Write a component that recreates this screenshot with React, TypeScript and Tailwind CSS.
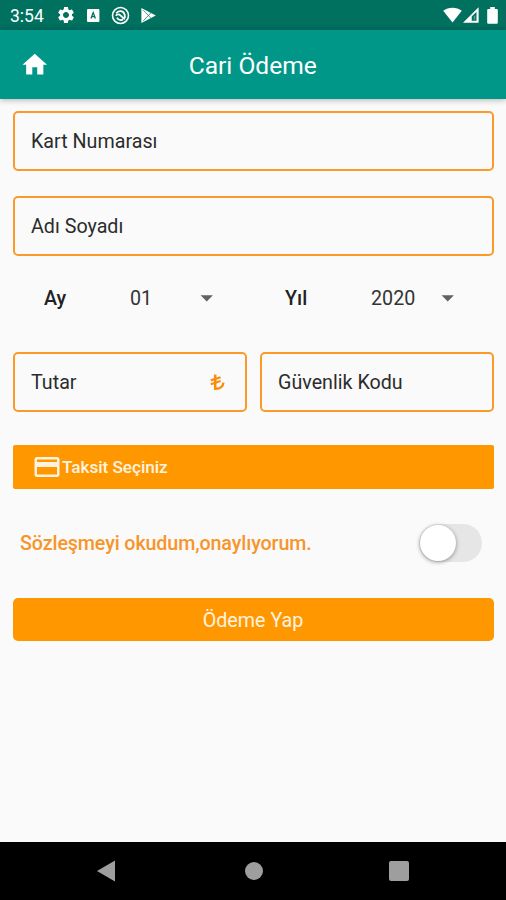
import React, { useState } from 'react';
import { MdArrowDropDown, MdCreditCard, MdHome, MdSettings } from 'react-icons/md';

function StatusBar() {
  return (
    <div className="flex h-[30px] items-center bg-[#00705f] pl-[10px] pr-[8px] text-white">
      <span className="w-[46px] pt-[3px] text-[17.5px] leading-none">3:54</span>
      <MdSettings className="h-[20px] w-[20px]" />
      <svg className="ml-[11px] h-[13px] w-[13px]" viewBox="0 0 13 13">
        <rect x="0" y="0" width="12.4" height="13" rx="1" fill="currentColor" />
        <path d="M4 9.4 6.2 3.6 8.4 9.4M5 7.6h2.5" fill="none" stroke="#00705f" strokeWidth="1.3" />
      </svg>
      <svg className="ml-[11px] h-[19px] w-[19px]" viewBox="0 0 19 19" fill="none" stroke="currentColor">
        <circle cx="9.5" cy="9.5" r="8" strokeWidth="1.6" />
        <path d="M5.2 7.4C7 4.2 12.2 4 13.6 8.4c.4 1.4.3 2.6.2 3.6" strokeWidth="1.8" />
        <path d="M4.8 9.8c1.4-1.8 3.2-1.8 4.6-.4l4.4 4M6 11.6c1.2 2.4 3.6 3 6 1.8" strokeWidth="1.8" />
      </svg>
      <svg className="ml-[11px] h-[15px] w-[15px]" viewBox="0 0 15 15">
        <path d="M.4.1 14.8 7.5.4 14.9Z" fill="currentColor" />
        <path d="M2.3 2.2 9.8 10M2.3 12.8 9.8 5" fill="none" stroke="#00705f" strokeWidth="0.7" />
      </svg>
      <div className="ml-auto flex items-center">
        <svg className="h-[16px] w-[19px]" viewBox="0 0 19 16" fill="currentColor">
          <path d="M9.5 15.6.2 3.8C5.4-.4 13.6-.4 18.8 3.8Z" />
        </svg>
        <svg className="ml-[1px] h-[16px] w-[16px]" viewBox="0 0 16 16">
          <path d="M0 15.7 15.6.3v15.4Z" fill="currentColor" />
          <path d="M8.7 13.7V9.5l4.8-4.7v8.9Z" fill="#00705f" />
          <path d="M10.8 12.5v-3l1.4-1.5v4.5Z" fill="currentColor" opacity="0.35" />
        </svg>
        <svg className="ml-[8px] h-[17px] w-[11px]" viewBox="0 0 11 17" fill="currentColor">
          <path d="M3.2 0h4.6v2h1.9q1.1 0 1.1 1.1v12.6q0 1.1-1.1 1.1H1.3q-1.1 0-1.1-1.1V3.1Q.2 2 1.3 2h1.9Z" />
        </svg>
      </div>
    </div>
  );
}

function AppBar() {
  return (
    <header className="relative z-10 flex h-[69px] items-center bg-[#009788] pl-[20px] text-white shadow-[0_1px_6px_rgba(0,0,0,0.3)]">
      <MdHome className="h-[29.5px] w-[29.5px]" />
      <h1 className="flex-1 pr-[50px] pt-[3px] text-center text-[24.6px] leading-none">Cari Ödeme</h1>
    </header>
  );
}

function Field({ label, suffix }: { label: string; suffix?: React.ReactNode }) {
  return (
    <div className="flex h-[60px] flex-1 items-center justify-between rounded-[5px] border-2 border-[#fb9a28] pl-[16px] pr-[20px]">
      <span className="pt-[2px] text-[19.7px] text-[#2c2c2c]">{label}</span>
      {suffix}
    </div>
  );
}

function Picker({ label, value }: { label: string; value: string }) {
  return (
    <div className="flex w-[241px] shrink-0 items-center">
      <span className="w-[86px] pt-[2px] text-[19.7px] font-medium text-[#222]">{label}</span>
      <span className="w-[62px] pt-[2px] text-[19.7px] text-[#333]">{value}</span>
      <MdArrowDropDown className="h-[29.5px] w-[29.5px] text-[#616161]" />
    </div>
  );
}

function LiraIcon() {
  return (
    <svg className="h-[17px] w-[15px]" viewBox="0 0 15 17" fill="none" stroke="#fb8c0c" strokeWidth="2.5">
      <path d="M5.2.4v14.4c4.6.3 7.8-2.1 8.2-6.2" />
      <path d="M.8 6.4 10.6 3.2M.8 10.2l9.8-3.2" strokeWidth="2.2" />
    </svg>
  );
}

function NavBar() {
  return (
    <nav className="flex h-[58px] items-center bg-black px-[97px] text-[#9e9e9e]">
      <svg className="h-[22px] w-[18px]" viewBox="0 0 18 22" fill="currentColor">
        <path d="M0 11 18 .5v21Z" />
      </svg>
      <div className="ml-[130px] h-[18px] w-[18px] rounded-full bg-current" />
      <div className="ml-[126px] h-[20px] w-[20px] rounded-[2px] bg-current" />
    </nav>
  );
}

export default function App() {
  const [accepted, setAccepted] = useState(false);

  return (
    <div className="flex h-[900px] w-[506px] flex-col overflow-hidden bg-[#fafafa] font-['Roboto','Noto_Sans',sans-serif]">
      <StatusBar />
      <AppBar />

      <main className="flex flex-1 flex-col pl-[13px] pr-[12px] pt-[12px]">
        <div className="flex">
          <Field label="Kart Numarası" />
        </div>
        <div className="mt-[25px] flex">
          <Field label="Adı Soyadı" />
        </div>

        {/* Expiry date */}
        <div className="mt-[22px] flex h-[40px] pl-[31px]">
          <Picker label="Ay" value="01" />
          <Picker label="Yıl" value="2020" />
        </div>

        <div className="mt-[34px] flex gap-[13px]">
          <Field label="Tutar" suffix={<LiraIcon />} />
          <Field label="Güvenlik Kodu" />
        </div>

        <button className="mt-[33px] flex h-[44px] items-center rounded-[2px] bg-[#ff9800] pl-[19px] text-[17.2px] font-medium text-[#fff3e0]">
          <MdCreditCard className="h-[30px] w-[30px]" />
          <span className="pt-[2px] tracking-[-0.05px]">Taksit Seçiniz</span>
        </button>

        {/* Agreement */}
        <div className="mt-[35px] flex h-[38px] items-center justify-between pl-[7px] pr-[12px]">
          <span className="pt-[2px] text-[19.7px] font-medium tracking-[-0.12px] text-[#f7952a]">
            Sözleşmeyi okudum,onaylıyorum.
          </span>
          <button
            role="switch"
            aria-checked={accepted}
            onClick={() => setAccepted(!accepted)}
            className={`flex h-[38px] w-[63px] items-center rounded-full px-[1px] ${
              accepted ? 'justify-end bg-[#ff9800]' : 'bg-[#e6e6e6]'
            }`}
          >
            <span className="h-[36px] w-[36px] rounded-full bg-white shadow-[0_1px_4px_rgba(0,0,0,0.4)]" />
          </button>
        </div>

        <button className="mt-[36px] h-[43px] rounded-[5px] bg-[#ff9800] pt-[2px] pr-px text-[19.7px] text-[#fff3e0]">
          Ödeme Yap
        </button>
      </main>

      <NavBar />
    </div>
  );
}
